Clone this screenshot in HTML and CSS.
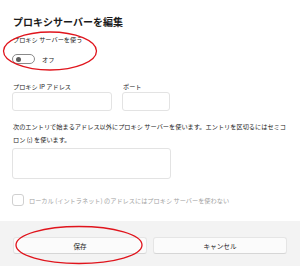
FILE: index.html
```html
<!DOCTYPE html>
<html lang="ja">
<head>
    <meta charset="UTF-8">
    <title>プロキシサーバーを編集</title>
    <link rel="stylesheet" href="styles.css">
</head>
<body>
    <div class="dialog">
        <div class="content">
            <h1>プロキシサーバーを編集</h1>
            <div class="label">プロキシ サーバーを使う</div>
            <div class="toggle-row">
                <span class="toggle"><span class="knob"></span></span>
                <span class="toggle-text">オフ</span>
            </div>
            <div class="fields">
                <div class="field">
                    <div class="label">プロキシ IP アドレス</div>
                    <div class="input input-ip"></div>
                </div>
                <div class="field">
                    <div class="label">ポート</div>
                    <div class="input input-port"></div>
                </div>
            </div>
            <p class="note">次のエントリで始まるアドレス以外にプロキシ サーバーを使います。エントリを区切るにはセミコロン (;) を使います。</p>
            <div class="input textarea"></div>
            <div class="check-row">
                <span class="checkbox"></span>
                <span class="check-text">ローカル (イントラネット) のアドレスにはプロキシ サーバーを使わない</span>
            </div>
        </div>
        <div class="footer">
            <button class="btn">保存</button>
            <button class="btn">キャンセル</button>
        </div>
    </div>

    <!-- red hand-drawn markers -->
    <svg class="mark mark-toggle" width="100" height="44" viewBox="0 0 100 44">
        <ellipse cx="48" cy="21" rx="46.5" ry="19" fill="none" stroke="#e0141c" stroke-width="1.3"/>
    </svg>
    <svg class="mark mark-save" width="134" height="42" viewBox="0 0 134 42">
        <ellipse cx="64" cy="20" rx="63" ry="18.5" fill="none" stroke="#e0141c" stroke-width="1.3"/>
    </svg>
</body>
</html>
```

FILE: styles.css
```css
:root {
    --text-color: #1b1b1b;
    --muted-color: #a2a2a2;
    --border-color: #e3e3e3;
    --footer-bg: #f3f3f3;
}
body {
    margin: 0;
    width: 300px;
    height: 266px;
    overflow: hidden;
    background-color: #ffffff;
    color: var(--text-color);
    font-family: "Noto Sans CJK JP", "Noto Sans", sans-serif;
    position: relative;
}
.dialog {
    display: flex;
    flex-direction: column;
    height: 266px;
}
.content {
    padding: 14px 8px 0 13px;
    height: 207px;
}
h1 {
    margin: 0 0 6px;
    font-size: 10px;
    line-height: 15px;
    font-weight: 700;
}
.label {
    font-size: 6.2px;
    line-height: 10px;
}
.toggle-row {
    display: flex;
    align-items: center;
    gap: 7px;
    margin: 9px 0 0 -1px;
    height: 10px;
}
.toggle {
    width: 18px;
    height: 8px;
    border: 1px solid #8a8a8a;
    border-radius: 6px;
    display: flex;
    align-items: center;
    padding-left: 3px;
    box-sizing: content-box;
}
.knob {
    width: 5px;
    height: 5px;
    border-radius: 50%;
    background-color: #5d5d5d;
}
.toggle-text {
    font-size: 6.2px;
}
.fields {
    display: flex;
    gap: 11px;
    margin-top: 19px;
}
.field .label {
    line-height: 8px;
    margin-bottom: 1px;
}
.input {
    border: 1px solid var(--border-color);
    border-radius: 3px;
    box-sizing: border-box;
    height: 19px;
    margin-left: -1px;
}
.input-ip {
    width: 100px;
}
.input-port {
    width: 48px;
}
.note {
    margin: 10px 0 2px;
    font-size: 6.2px;
    line-height: 12.5px;
}
.textarea {
    width: 159px;
    height: 31px;
}
.check-row {
    display: flex;
    align-items: center;
    gap: 5px;
    margin-top: 15px;
    margin-left: -1px;
}
.checkbox {
    width: 12px;
    height: 12px;
    border: 1px solid #d0d0d0;
    border-radius: 3px;
    box-sizing: border-box;
}
.check-text {
    font-size: 6.2px;
    color: var(--muted-color);
}
.footer {
    flex: 1;
    background-color: var(--footer-bg);
    display: flex;
    gap: 6px;
    padding: 16px 13px 0;
}
.btn {
    flex: 1;
    height: 17px;
    background-color: #fbfbfb;
    border: 1px solid #e5e5e5;
    border-bottom-color: #d6d6d6;
    border-radius: 3px;
    font-family: inherit;
    font-size: 6.6px;
    color: var(--text-color);
    padding: 0;
}
.mark {
    position: absolute;
    overflow: visible;
}
.mark-toggle {
    left: 2px;
    top: 30px;
}
.mark-save {
    left: 15px;
    top: 225px;
}
```
